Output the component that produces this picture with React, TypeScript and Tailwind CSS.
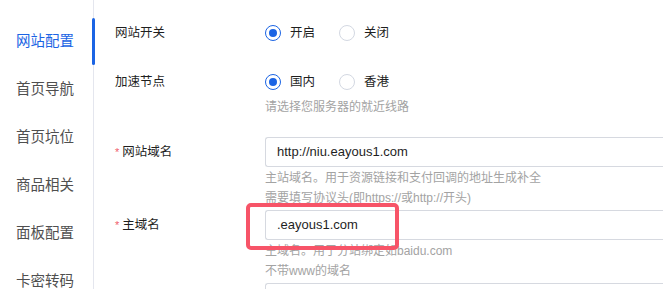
import React from 'react';

const font = { fontFamily: '"Liberation Sans", "Noto Sans CJK SC", sans-serif' };

const navItems = ['网站配置', '首页导航', '首页坑位', '商品相关', '面板配置', '卡密转码'];

function Radio({ label, checked }: { label: string; checked?: boolean }) {
  return (
    <label className="flex items-center gap-[9px] mr-[24px]">
      {checked ? (
        <span className="w-[16px] h-[16px] rounded-full border-[1.5px] border-[#1b64e4] flex items-center justify-center">
          <span className="w-[8px] h-[8px] rounded-full bg-[#1b64e4]" />
        </span>
      ) : (
        <span className="w-[16px] h-[16px] rounded-full border border-[#d3d8e2]" />
      )}
      <span className="text-[12.5px] text-[#1f1f1f]">{label}</span>
    </label>
  );
}

function Label({ text, required }: { text: string; required?: boolean }) {
  return (
    <div className="w-[150px] h-[30px] shrink-0 flex items-center text-[12.5px] text-[#1f1f1f]">
      {required && <span className="text-[#f0606b] mr-[3px] text-[11px]">*</span>}
      {text}
    </div>
  );
}

export default function App() {
  return (
    <div className="w-[663px] h-[289px] overflow-hidden bg-white flex" style={font}>
      {/* side nav */}
      <div className="w-[94px] shrink-0 border-r border-[#e4e6ee] pt-[18px]">
        {navItems.map((item, i) => (
          <div
            key={item}
            className={`relative h-[48px] flex items-center pl-[16px] text-[14.5px] ${
              i === 0 ? 'text-[#1b64e4]' : 'text-[#4f4f4f]'
            }`}
          >
            {item}
            {i === 0 && <span className="absolute right-[-2px] top-0 w-[3px] h-[47px] bg-[#1b64e4] rounded-full" />}
          </div>
        ))}
      </div>

      {/* form */}
      <div className="flex-1 pl-[21px] pt-[18px]">
        <div className="flex items-start">
          <Label text="网站开关" />
          <div className="flex items-center h-[30px]">
            <Radio label="开启" checked />
            <Radio label="关闭" />
          </div>
        </div>

        <div className="flex items-start mt-[19px]">
          <Label text="加速节点" />
          <div>
            <div className="flex items-center h-[30px]">
              <Radio label="国内" checked />
              <Radio label="香港" />
            </div>
            <div className="text-[12px] leading-[20px] text-[#a3a3a3]">请选择您服务器的就近线路</div>
          </div>
        </div>

        <div className="flex items-start mt-[20px]">
          <Label text="网站域名" required />
          <div className="flex-1">
            <div className="h-[30px] border border-[#d6d9e0] border-r-0 rounded-l-[3px] flex items-center pl-[11px] text-[13px] text-[#1f1f1f]">
              http://niu.eayous1.com
            </div>
            <div className="text-[12px] leading-[20px] text-[#a3a3a3] mt-[1px]">
              <div>主站域名。用于资源链接和支付回调的地址生成补全</div>
              <div>需要填写协议头(即https://或http://开头)</div>
            </div>
          </div>
        </div>

        <div className="flex items-start mt-[2px]">
          <Label text="主域名" required />
          <div className="flex-1 relative">
            <div className="h-[30px] border border-[#d6d9e0] border-r-0 rounded-l-[3px] flex items-center pl-[11px] text-[13px] text-[#1f1f1f]">
              .eayous1.com
            </div>
            <div className="text-[12px] leading-[20px] text-[#a3a3a3] mt-[1px]">
              <div>主域名。用于分站绑定如baidu.com</div>
              <div>不带www的域名</div>
            </div>
            {/* annotation box */}
            <div className="absolute left-[-19px] top-[-7px] w-[153px] h-[47px] border-[4px] border-[#f75468] rounded-[5px]" />
          </div>
        </div>

        <div className="flex mt-[2px]">
          <div className="w-[150px] shrink-0" />
          <div className="flex-1 h-[30px] border border-[#d6d9e0] border-r-0 rounded-l-[3px]" />
        </div>
      </div>
    </div>
  );
}
